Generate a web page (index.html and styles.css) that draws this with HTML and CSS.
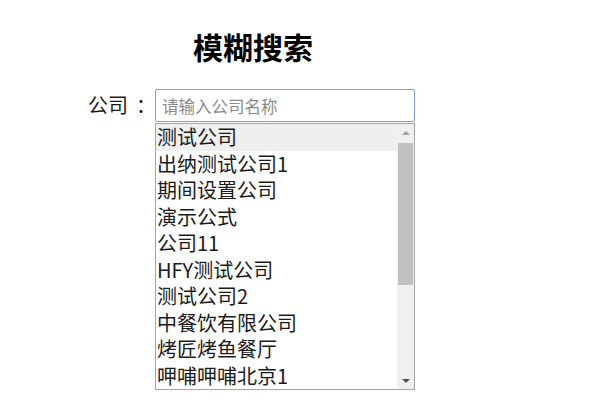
FILE: index.html
```html
<!DOCTYPE html>
<html lang="zh-CN">
	<head>
		<meta charset="UTF-8" />
		<meta name="viewport" content="width=device-width, initial-scale=1.0" />
		<title>模糊搜索</title>
		<link rel="stylesheet" href="styles.css">
	</head>

	<body>
		<div class="search-page">
			<h2 class="title">模糊搜索</h2>

			<div class="search-row">
				<label class="label" for="company">公司<span class="colon">：</span></label>
				<div class="search-box">
					<input id="company" class="search-input" type="text" placeholder="请输入公司名称" />
					<div class="result-list">
						<ul class="options">
							<li class="option selected">测试公司</li>
							<li class="option">出纳测试公司1</li>
							<li class="option">期间设置公司</li>
							<li class="option">演示公式</li>
							<li class="option">公司11</li>
							<li class="option">HFY测试公司</li>
							<li class="option">测试公司2</li>
							<li class="option">中餐饮有限公司</li>
							<li class="option">烤匠烤鱼餐厅</li>
							<li class="option">呷哺呷哺北京1</li>
						</ul>
						<!-- scrollbar -->
						<div class="scrollbar">
							<div class="scroll-btn"><span class="arrow-up"></span></div>
							<div class="scroll-track">
								<div class="scroll-thumb"></div>
							</div>
							<div class="scroll-btn"><span class="arrow-down"></span></div>
						</div>
					</div>
				</div>
			</div>
		</div>
	</body>
</html>
```

FILE: styles.css
```css
:root {
	--text-color: #1a1a1a;
	--placeholder: #8a8a8a;
	--focus-border: #7b9fd6;
	--list-border: #a5a5a5;
	--selected-bg: #efefef;
	--track-bg: #f0f0f0;
	--thumb-bg: #c1c1c1;
	--arrow-color: #a3a3a3;
}

body {
	margin: 0;
	font-family: "Noto Sans CJK SC", "Noto Sans", sans-serif;
	color: var(--text-color);
	background: #fff;
}

.search-page {
	padding-top: 25px;
}

.title {
	margin: 0 0 22px 193px;
	font-size: 30px;
	line-height: 42px;
	font-weight: bold;
	color: #000;
}

.search-row {
	display: flex;
	align-items: flex-start;
	padding-left: 88px;
}

.label {
	flex-shrink: 0;
	font-size: 20px;
	line-height: 30px;
	margin-top: 1px;
	width: 67px;
	white-space: nowrap;
}

.colon {
	margin-left: 8px;
}

.search-box {
	display: flex;
	flex-direction: column;
	width: 260px;
}

.search-input {
	box-sizing: border-box;
	width: 260px;
	height: 33px;
	margin: 0;
	padding: 0 6px;
	border: 1px solid var(--focus-border);
	border-radius: 2px;
	font-family: inherit;
	font-size: 16.5px;
	color: var(--text-color);
	outline: none;
}

.search-input::placeholder {
	color: var(--placeholder);
}

/* Dropdown list under the input */
.result-list {
	box-sizing: border-box;
	display: flex;
	height: 267px;
	margin-top: 1px;
	border: 1px solid var(--list-border);
	overflow: hidden;
}

.options {
	flex: 1;
	margin: 0;
	padding: 0;
	list-style: none;
}

.option {
	height: 26.5px;
	padding-left: 1px;
	font-size: 20px;
	line-height: 26.5px;
	white-space: nowrap;
}

.option.selected {
	background: var(--selected-bg);
}

.scrollbar {
	width: 17px;
	display: flex;
	flex-direction: column;
	background: var(--track-bg);
}

.scroll-btn {
	height: 17px;
	display: flex;
	align-items: center;
	justify-content: center;
}

.arrow-up,
.arrow-down {
	width: 0;
	height: 0;
	border-left: 4px solid transparent;
	border-right: 4px solid transparent;
}

.arrow-up {
	border-bottom: 4px solid var(--arrow-color);
}

.arrow-down {
	border-top: 4px solid #505050;
}

.scroll-track {
	flex: 1;
	padding: 2px 1px;
}

.scroll-thumb {
	height: 142px;
	background: var(--thumb-bg);
}
```
